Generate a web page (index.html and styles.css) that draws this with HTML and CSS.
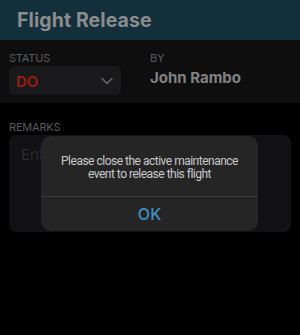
FILE: index.html
```html
<!DOCTYPE html>
<html lang="en">
<head>
  <meta charset="UTF-8" />
  <meta name="viewport" content="width=device-width, initial-scale=1.0"/>
  <title>Flight Release</title>
  <link rel="stylesheet" href="styles.css">
</head>
<body>

  <!-- Top bar -->
  <header class="top-bar">
    <h1 class="title">Flight Release</h1>
  </header>

  <!-- Status / signed by -->
  <section class="release-info">
    <div class="field status-field">
      <div class="label">STATUS</div>
      <div class="select">
        <span class="status-value">DO</span>
        <svg class="chevron" width="12" height="8" viewBox="0 0 12 8">
          <path d="M1 1.5 L6 6.5 L11 1.5" fill="none" stroke="#6d6d70" stroke-width="1.4" stroke-linecap="round" stroke-linejoin="round"/>
        </svg>
      </div>
    </div>
    <div class="field by-field">
      <div class="label">BY</div>
      <div class="by-name">John Rambo</div>
    </div>
  </section>

  <!-- Remarks -->
  <section class="remarks">
    <div class="label">REMARKS</div>
    <div class="remarks-box">
      <span class="placeholder">Enter remarks</span>

      <!-- Alert dialog -->
      <div class="alert">
        <div class="alert-message">Please close the active maintenance<br>event to release this flight</div>
        <button class="alert-button">OK</button>
      </div>
    </div>
  </section>

</body>
</html>
```

FILE: styles.css
```css
* {
  box-sizing: border-box;
  margin: 0;
  padding: 0;
}

body {
  background-color: #000;
  color: #8a8a8c;
  font-family: 'Inter', 'Roboto', sans-serif;
  width: 300px;
  height: 335px;
  overflow: hidden;
}

.top-bar {
  background-color: #132f3c;
  height: 40px;
  padding: 8px 17px 0 17px;
}

.title {
  font-size: 19.5px;
  font-weight: 700;
  color: #8c8c8c;
  letter-spacing: 0.1px;
}

.release-info {
  background-color: #0e0e0f;
  height: 63px;
  display: flex;
  padding: 12px 9px 0 9px;
}

.label {
  font-size: 11px;
  color: #5b5b5e;
  letter-spacing: -0.2px;
  line-height: 13px;
}

.status-field {
  width: 141px;
}

.select {
  margin-top: 1px;
  width: 112px;
  height: 29px;
  background-color: #19191b;
  border-radius: 6px;
  display: flex;
  align-items: center;
  justify-content: space-between;
  padding: 0 8px 0 7px;
}

.status-value {
  color: #8e1d14;
  font-size: 15px;
  font-weight: 700;
  margin-top: 2px;
}

.by-name {
  font-size: 15px;
  font-weight: 700;
  color: #828284;
  margin-top: 3px;
}

.remarks {
  padding: 18px 9px 0 9px;
}

.remarks-box {
  position: relative;
  margin-top: 1px;
  height: 97px;
  background-color: #111113;
  border-radius: 7px;
  padding: 9px 12px;
}

.placeholder {
  font-size: 15px;
  color: #2b2b2d;
}

.alert {
  position: absolute;
  left: 32px;
  top: 1px;
  width: 217px;
  height: 95px;
  background-color: #252526;
  border-radius: 10px;
  display: flex;
  flex-direction: column;
}

.alert-message {
  flex: 1;
  text-align: center;
  font-family: 'Roboto', sans-serif;
  font-size: 12px;
  letter-spacing: -0.5px;
  line-height: 13px;
  color: #c8c8ca;
  padding: 19px 6px 0 6px;
  white-space: nowrap;
}

.alert-button {
  height: 35px;
  border: none;
  border-top: 1px solid #3a3a3c;
  background: none;
  color: #3f90c2;
  font-family: inherit;
  font-size: 16px;
  font-weight: 500;
}
```
